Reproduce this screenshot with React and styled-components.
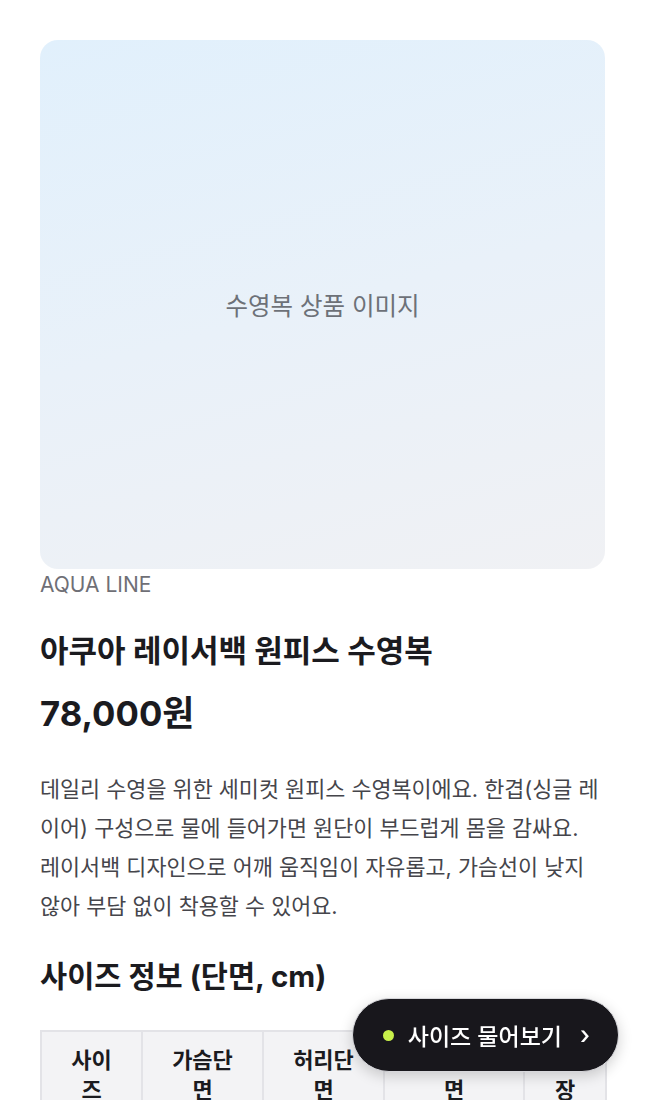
import React from "react"
import styled, { createGlobalStyle } from "styled-components"

const GlobalStyle = createGlobalStyle`
  * { box-sizing: border-box; }
  html, body {
    margin: 0;
    padding: 0;
    background: #ffffff;
    font-family: Inter, "Noto Sans CJK KR", sans-serif;
    color: #1b1b1f;
  }
`

const Page = styled.main`
  padding: 40px 41px 140px 40px;
`

const ProductImage = styled.div`
  height: 529px;
  border-radius: 18px;
  background: linear-gradient(165deg, #e1f0fc 0%, #e9f1f9 50%, #f0f1f4 100%);
  display: flex;
  align-items: center;
  justify-content: center;
  font-size: 24.5px;
  color: #6d7178;
`

const Brand = styled.div`
  margin-top: 2px;
  font-size: 21px;
  line-height: 28px;
  color: #6f6f76;
`

const Title = styled.h1`
  margin: 32px 0 0;
  font-size: 31px;
  line-height: 40px;
  font-weight: 700;
`

const Price = styled.div`
  margin-top: 20px;
  font-size: 34.7px;
  line-height: 44px;
  font-weight: 700;
`

const Description = styled.p`
  margin: 35px 0 0;
  font-size: 21.8px;
  line-height: 39px;
  color: #45454b;
  white-space: nowrap;
`

const SectionTitle = styled.h2`
  margin: 31px 0 0;
  font-size: 29.5px;
  line-height: 38px;
  font-weight: 700;
`

const SizeTable = styled.table`
  margin-top: 35px;
  width: 100%;
  border-collapse: collapse;
  table-layout: fixed;
`

const HeadCell = styled.th`
  width: ${props => props.width}px;
  padding: 13px 24px;
  background: #f3f3f5;
  border: 2px solid #e3e3e7;
  font-size: 22px;
  line-height: 30px;
  font-weight: 700;
  color: #1b1b1f;
  text-align: center;
`

const AskButton = styled.button`
  position: fixed;
  right: 27px;
  bottom: 28px;
  height: 74px;
  padding: 0 28px 0 30px;
  display: flex;
  align-items: center;
  gap: 14px;
  border: 1px solid #d6d6da;
  border-radius: 37px;
  background: #18171c;
  color: #ffffff;
  font-family: inherit;
  font-size: 23px;
  font-weight: 500;
  box-shadow: 0 4px 14px rgba(0, 0, 0, 0.18);
`

const Dot = styled.span`
  width: 11px;
  height: 11px;
  border-radius: 50%;
  background: #c8f04a;
`

const Chevron = styled.span`
  margin-left: 4px;
  font-size: 25px;
  line-height: 1;
`

const columns = [
  { label: "사이즈", width: 101 },
  { label: "가슴단면", width: 121 },
  { label: "허리단면", width: 121 },
  { label: "엉덩이단면", width: 140 },
  { label: "총장", width: 82 },
]

export default function App() {
  return (
    <>
      <GlobalStyle />
      <Page>
        <ProductImage>수영복 상품 이미지</ProductImage>
        <Brand>AQUA LINE</Brand>
        <Title>아쿠아 레이서백 원피스 수영복</Title>
        <Price>78,000원</Price>
        <Description>
          데일리 수영을 위한 세미컷 원피스 수영복이에요. 한겹(싱글 레<br />
          이어) 구성으로 물에 들어가면 원단이 부드럽게 몸을 감싸요.<br />
          레이서백 디자인으로 어깨 움직임이 자유롭고, 가슴선이 낮지<br />
          않아 부담 없이 착용할 수 있어요.
        </Description>
        <SectionTitle>사이즈 정보 (단면, cm)</SectionTitle>
        <SizeTable>
          <thead>
            <tr>
              {columns.map(col => (
                <HeadCell key={col.label} width={col.width}>{col.label}</HeadCell>
              ))}
            </tr>
          </thead>
        </SizeTable>
      </Page>
      <AskButton>
        <Dot />
        사이즈 물어보기
        <Chevron>›</Chevron>
      </AskButton>
    </>
  )
}
